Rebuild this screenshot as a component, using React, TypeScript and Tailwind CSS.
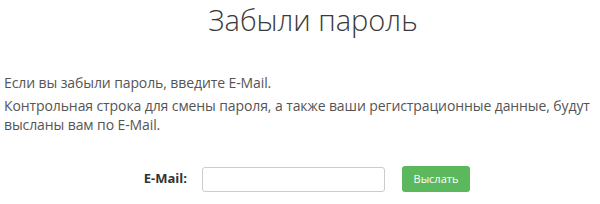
import React from 'react';

const App = () => {
  return (
    <div className="w-[600px] h-[204px] bg-white overflow-hidden px-1 font-['Open_Sans',sans-serif] text-[#555]">
      <h1 className="pl-[26px] text-center text-[29px] leading-[40px] font-light text-[#3a3a3a]">Забыли пароль</h1>

      <p className="mt-[33px] text-[14px] leading-[19px] tracking-[-0.1px]">Если вы забыли пароль, введите E-Mail.</p>
      <p className="mt-[4px] text-[14px] leading-[19px] tracking-[-0.1px]">
        Контрольная строка для смены пароля, а также ваши регистрационные данные, будут высланы вам по E-Mail.
      </p>

      <div className="mt-[32px] flex items-center">
        <label className="w-[183px] text-right text-[13px] font-bold text-[#333]">E-Mail:</label>
        <input type="text" className="ml-[15px] w-[183px] h-[25px] border border-[#ccc] rounded-[3px] bg-white" />
        <button className="ml-[17px] w-[68px] h-[26px] rounded-[3px] bg-[#5cb85c] text-white text-[11px]">Выслать</button>
      </div>
    </div>
  );
};

export default App;
